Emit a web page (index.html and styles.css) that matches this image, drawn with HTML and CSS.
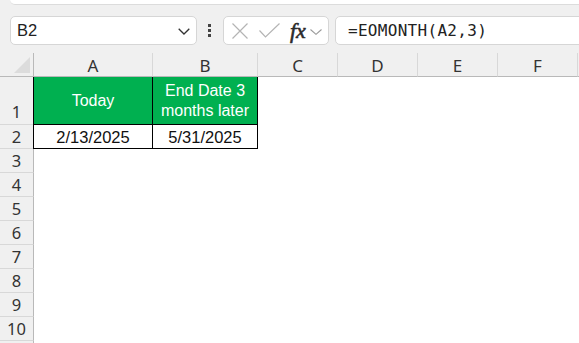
FILE: index.html
```html
<!DOCTYPE html>
<html>
<head>
<meta charset="utf-8">
<link rel="stylesheet" href="styles.css">
</head>
<body>
<div class="app">
  <div class="ribbon"></div>
  <div class="fbar">
    <div class="namebox">
      <span class="name">B2</span>
      <svg class="chev" width="12" height="7" viewBox="0 0 12 7"><polyline points="0.7,0.7 6,6 11.3,0.7" fill="none" stroke="#333" stroke-width="1.3"/></svg>
    </div>
    <div class="dots"><i></i><i></i><i></i></div>
    <div class="fxbox">
      <svg class="ico-x" width="16" height="16" viewBox="0 0 16 16"><path d="M0.5 0.5 L15.5 15.5 M15.5 0.5 L0.5 15.5" stroke="#b4b4b4" stroke-width="1.2" fill="none"/></svg>
      <svg class="ico-check" width="21" height="15" viewBox="0 0 21 15"><polyline points="0.5,7.5 6.5,14 20.5,0.5" fill="none" stroke="#b4b4b4" stroke-width="1.2"/></svg>
      <span class="fx">fx</span>
      <svg class="chev-s" width="12" height="6" viewBox="0 0 12 6"><polyline points="0.5,0.5 6,5.3 11.5,0.5" fill="none" stroke="#9a9a9a" stroke-width="1.1"/></svg>
    </div>
    <div class="formula">=EOMONTH(A2,3)</div>
  </div>
  <div class="grid">
    <div class="corner"><svg width="16" height="16" viewBox="0 0 16 16"><polygon points="16,0 16,16 0,16" fill="#dcdcdc"/></svg></div>
    <div class="ch">A</div><div class="ch">B</div><div class="ch">C</div><div class="ch">D</div><div class="ch">E</div><div class="ch">F</div><div class="ch"></div>

    <div class="rh rh-bottom">1</div>
    <div class="cell hd first">Today</div>
    <div class="cell hd">End Date 3 months later</div>
    <div class="e"></div><div class="e"></div><div class="e"></div><div class="e"></div><div class="e"></div>

    <div class="rh">2</div>
    <div class="cell val first">2/13/2025</div>
    <div class="cell val">5/31/2025</div>
    <div class="e"></div><div class="e"></div><div class="e"></div><div class="e"></div><div class="e"></div>

    <div class="rh">3</div><div class="e"></div><div class="e"></div><div class="e"></div><div class="e"></div><div class="e"></div><div class="e"></div><div class="e"></div>
    <div class="rh">4</div><div class="e"></div><div class="e"></div><div class="e"></div><div class="e"></div><div class="e"></div><div class="e"></div><div class="e"></div>
    <div class="rh">5</div><div class="e"></div><div class="e"></div><div class="e"></div><div class="e"></div><div class="e"></div><div class="e"></div><div class="e"></div>
    <div class="rh">6</div><div class="e"></div><div class="e"></div><div class="e"></div><div class="e"></div><div class="e"></div><div class="e"></div><div class="e"></div>
    <div class="rh">7</div><div class="e"></div><div class="e"></div><div class="e"></div><div class="e"></div><div class="e"></div><div class="e"></div><div class="e"></div>
    <div class="rh">8</div><div class="e"></div><div class="e"></div><div class="e"></div><div class="e"></div><div class="e"></div><div class="e"></div><div class="e"></div>
    <div class="rh">9</div><div class="e"></div><div class="e"></div><div class="e"></div><div class="e"></div><div class="e"></div><div class="e"></div><div class="e"></div>
    <div class="rh">10</div><div class="e"></div><div class="e"></div><div class="e"></div><div class="e"></div><div class="e"></div><div class="e"></div><div class="e"></div>
    <div class="rh"></div><div class="e"></div><div class="e"></div><div class="e"></div><div class="e"></div><div class="e"></div><div class="e"></div><div class="e"></div>
  </div>
</div>
</body>
</html>
```

FILE: styles.css
```css
* { box-sizing: border-box; }
html, body { margin: 0; padding: 0; background: #fff; }
.app {
  width: 579px;
  height: 343px;
  overflow: hidden;
  background: #f0f0f0;
  font-family: "Noto Sans", "Open Sans", sans-serif;
  color: #333;
}
.ribbon {
  height: 5px;
  margin-left: 10px;
  background: #fff;
  border-bottom: 1px solid #dcdcdc;
  border-bottom-left-radius: 6px;
}
.fbar {
  margin-top: 11px;
  height: 29px;
  display: flex;
  align-items: center;
  padding-left: 10px;
}
.namebox {
  width: 187px;
  height: 29px;
  background: #fff;
  border: 1px solid #d6d6d6;
  border-radius: 5px;
  display: flex;
  align-items: center;
  justify-content: space-between;
  padding: 0 6px 0 6px;
}
.name {
  font-family: "Liberation Sans", Arial, sans-serif;
  font-size: 16.5px;
  color: #222;
}
.chev { margin-top: 1px; }
.dots {
  margin-left: 11px;
  width: 3px;
  display: flex;
  flex-direction: column;
  gap: 2px;
}
.dots i { display: block; width: 3px; height: 3px; background: #444; }
.fxbox {
  margin-left: 12px;
  width: 106px;
  height: 29px;
  background: #fff;
  border: 1px solid #d6d6d6;
  border-radius: 5px;
  display: flex;
  align-items: center;
  padding-left: 8px;
}
.ico-x { margin-top: 1px; }
.ico-check { margin-left: 11px; }
.fx {
  margin-left: 10px;
  font-family: "Liberation Serif", "Times New Roman", serif;
  font-style: italic;
  font-size: 22px;
  line-height: 20px;
  color: #2b2b2b;
  -webkit-text-stroke: 0.6px #2b2b2b;
}
.chev-s { margin-left: 4px; margin-top: 3px; }
.formula {
  margin-left: 6px;
  flex: 1;
  height: 29px;
  margin-right: -10px;
  background: #fff;
  border: 1px solid #d6d6d6;
  border-radius: 5px;
  display: flex;
  align-items: center;
  padding-left: 12px;
  font-family: "DejaVu Sans Mono", monospace;
  font-size: 16px;
  letter-spacing: 0.3px;
  color: #222;
}
.grid {
  margin-top: 8px;
  display: grid;
  grid-template-columns: 34px 119px 105px 80px 80px 80px 80px 80px;
  grid-template-rows: 24px 48px repeat(10, 24px);
  background: #fff;
  width: 658px;
}
.corner {
  background: #f0f0f0;
  border-right: 1px solid #b9b9b9;
  border-bottom: 1px solid #b9b9b9;
  display: flex;
  align-items: flex-end;
  justify-content: flex-end;
  padding: 0 3px 3px 0;
}
.ch {
  background: #f0f0f0;
  border-right: 1px solid #d8d8d8;
  border-bottom: 1px solid #b9b9b9;
  display: flex;
  align-items: center;
  justify-content: center;
  font-size: 17px;
  color: #333;
  padding-top: 1px;
}
.rh {
  background: #f0f0f0;
  border-right: 1px solid #b9b9b9;
  border-bottom: 1px solid #d8d8d8;
  display: flex;
  align-items: center;
  justify-content: center;
  font-size: 16.5px;
  color: #333;
}
.rh-bottom { align-items: flex-end; padding-bottom: 1px; }
.e { background: #fff; }
.cell {
  border-right: 1px solid #000;
  border-bottom: 1px solid #000;
  display: flex;
  align-items: center;
  justify-content: center;
  text-align: center;
  font-family: "Liberation Sans", Arial, sans-serif;
  font-size: 16px;
  line-height: 20px;
}
.cell.first { box-shadow: -1px 0 0 #000; }
.hd {
  background: #00b050;
  color: #fff;
  padding: 0 2px;
}
.val {
  background: #fff;
  color: #111;
  font-size: 16.5px;
}
```
